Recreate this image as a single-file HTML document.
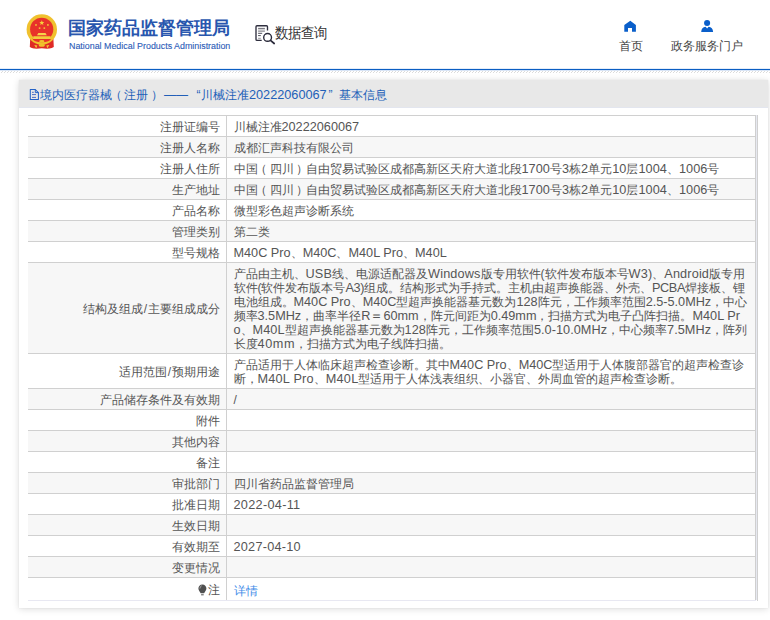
<!DOCTYPE html>
<html><head><meta charset="utf-8">
<style>
*{margin:0;padding:0;box-sizing:border-box}
html,body{width:770px;height:620px;overflow:hidden;background:#fff;font-family:"Liberation Sans",sans-serif}
.abs{position:absolute}
#hdr{position:absolute;left:0;top:0;width:770px;height:68px;background:#fff}
#emb{position:absolute;left:24px;top:13px}
#t1{position:absolute;left:68px;top:16px;font-size:17.8px;font-weight:600;color:#2856ae;white-space:nowrap;line-height:24px}
#t2{position:absolute;left:69px;top:40.5px;font-size:8.9px;color:#2d5db8;-webkit-text-stroke:0.12px #2d5db8;white-space:nowrap;line-height:10px}
#sq{position:absolute;left:254px;top:24px}
#sqt{position:absolute;left:275px;top:21.5px;font-size:13px;transform:scaleY(1.12);transform-origin:0 0;color:#333;white-space:nowrap;line-height:20px}
.nav{position:absolute;font-size:12px;color:#444;white-space:nowrap;line-height:16px}
#bl{position:absolute;left:0;top:68px;width:770px;height:3px;background:linear-gradient(#e4edf9 0 1px,#0a5ec3 1px 2px,#d9e5f6 2px 3px)}
#h1{position:absolute;left:0;top:71px;width:770px;height:1px;background:repeating-linear-gradient(90deg,transparent 0 2px,#dcdcdc 2px 3px)}
#h2{position:absolute;left:0;top:72px;width:770px;height:1px;background:repeating-linear-gradient(90deg,transparent 0 1px,#dcdcdc 1px 2px,transparent 2px 3px)}
#panel{position:absolute;left:19px;top:80px;width:749px;height:528px;background:#fff;box-shadow:0 1px 7px rgba(0,0,0,.14),0 0 1px rgba(0,0,0,.1)}
#ph{position:absolute;left:0;top:0;width:749px;height:28px;background:#e8e8e8;border-bottom:1px solid #e3e6ef}
.pt{position:absolute;top:7px;margin-left:-1px;font-size:12px;color:#2260b8;white-space:nowrap;line-height:16px}
#tbl{position:absolute;left:9px;top:35px;width:728px;border-collapse:collapse;font-size:12px;color:#555;line-height:14px}
#tbl td{border-top:1px solid #d0d0d0;padding:3.5px 0 2.5px 0;vertical-align:middle;white-space:nowrap}
#tbl td.l{width:198px;text-align:right;padding-right:5.5px;border-right:1px solid #d0d0d0}
#tbl td.v{padding-left:7px;border-right:1px solid #cfcfcf}
#tbl tr.g td{background:#f7f7f7}
#tbl tr.last td{border-bottom:1px solid #e8e8f2;padding-top:5px;padding-bottom:3px}
#tbl tr.last td.v{padding-top:6px;padding-bottom:2px}
.ln{height:14px}
a{color:#3f8ce8;text-decoration:none}
</style></head><body>
<div id="hdr">
 <svg id="emb" width="36" height="38" viewBox="0 0 36 38">
  <path d="M6.2 26 L5.8 34 Q8 35.6 10.5 35.4 L12.5 35.8 L17.8 35.2 L23 35.8 L25 35.4 Q27.6 35.6 29.8 34 L29.4 26Z" fill="#df2a26"/>
  <circle cx="17.8" cy="16.5" r="15.2" fill="#f0c12e"/>
  <circle cx="17.7" cy="16.3" r="11.6" fill="#e8322a"/>
  <ellipse cx="17.8" cy="25.8" rx="9.2" ry="3.4" fill="#e8322a"/>
  <polygon points="17.8,7.2 18.5,8.9 20.3,9 18.9,10.2 19.4,11.9 17.8,10.9 16.2,11.9 16.7,10.2 15.3,9 17.1,8.9" fill="#f6d23c"/>
  <circle cx="12" cy="11.9" r="0.95" fill="#f2c636"/><circle cx="23.9" cy="11.9" r="0.95" fill="#f2c636"/>
  <circle cx="15.6" cy="15.1" r="0.95" fill="#f2c636"/><circle cx="20.3" cy="15.1" r="0.95" fill="#f2c636"/>
  <path d="M13 22.2 L14.3 19.9 H21.5 L22.8 22.2Z" fill="#f6d44a"/>
  <path d="M8.9 26 L9.4 23.2 H26.4 L27 26Z" fill="#f3cd3c"/>
  <ellipse cx="17.8" cy="28.2" rx="2.6" ry="1.2" fill="#f0c12e"/>
  <ellipse cx="17.8" cy="32.2" rx="3" ry="1.5" fill="#f0c12e"/>
  <path d="M10.3 32 L13.3 32.6 L12.2 35.3Z M25.3 32 L22.3 32.6 L23.4 35.3Z" fill="#f2c636"/>
 </svg>
 <div id="t1">国家药品监督管理局</div>
 <div id="t2">National Medical Products Administration</div>
 <svg id="sq" width="22" height="21" viewBox="0 0 22 21">
  <path d="M7.7 16.4 H3 Q2 16.4 2 15.4 V2.7 Q2 1.7 3 1.7 H12.5 Q13.5 1.7 13.5 2.7 V6.6" fill="none" stroke="#2f2f3f" stroke-width="1.35"/>
  <path d="M4.1 4.4 H10.9 M4.1 7.1 H10.9" stroke="#6a6a74" stroke-width="1"/>
  <path d="M4.1 5.75 H10.9" stroke="#c4c4c8" stroke-width="1"/>
  <path d="M4.1 9.3 H8.2 M4.1 11.6 H6.8" stroke="#3a3a48" stroke-width="0.9"/>
  <path d="M4.1 14.3 H6.8" stroke="#8a8a92" stroke-width="0.9"/>
  <circle cx="13.6" cy="13.4" r="3.9" fill="none" stroke="#2a2a3a" stroke-width="1.4"/>
  <path d="M16.5 16.4 L20.2 19.5" stroke="#2a2a3a" stroke-width="1.7" stroke-linecap="round"/>
 </svg>
 <div id="sqt">数据查询</div>
 <svg class="abs" style="left:624px;top:20px" width="13" height="12" viewBox="0 0 13 12"><path d="M0.3 5 L6.3 0.8 L11.9 5 V11.8 H8 V7.9 H4 V11.8 H0.3Z" fill="#0a5fca"/></svg>
 <div class="nav" style="left:618.5px;top:38px">首页</div>
 <svg class="abs" style="left:701px;top:19px" width="13" height="14" viewBox="0 0 13 14"><circle cx="6.1" cy="4" r="3.05" fill="#0a5fca"/><path d="M0.2 12.9 Q0.5 8.1 4.6 7.8 L6.1 9.5 L7.6 7.8 Q11.8 8.1 12.1 12.9Z" fill="#0a5fca"/></svg>
 <div class="nav" style="left:670.5px;top:38px">政务服务门户</div>
</div>
<div id="bl"></div>
<div id="h1"></div><div id="h2"></div>
<div id="panel">
 <div id="ph">
  <svg class="abs" style="left:10px;top:9px" width="11" height="11" viewBox="0 0 11 11"><path d="M1.3 0.5 H6.3 L9.4 3.6 V10.4 H1.3Z" fill="none" stroke="#2462c6" stroke-width="1.05" stroke-linejoin="round"/><path d="M6.3 0.5 V3.6 H9.4" fill="none" stroke="#2462c6" stroke-width="1"/><path d="M3 3.3 H4.8 M3 5.6 H7 M3 8.4 H7" stroke="#3a5fc0" stroke-width="0.9"/></svg>
  <div class="pt" style="left:22px">境内医疗器械<span style="position:relative;left:-2px">（</span>注册<span style="position:relative;left:2.5px">）</span></div>
  <div class="pt" style="left:146px">——</div>
  <div class="pt" style="left:178.5px">“</div>
  <div class="pt" style="left:183px">川械注准<span style="font-size:12.7px">20222060067</span></div>
  <div class="pt" style="left:310.5px">”</div>
  <div class="pt" style="left:321px">基本信息</div>
 </div>
 <table id="tbl">
<tr><td class="l">注册证编号</td><td class="v">川械注准<span style="font-size:12.7px">20222060067</span></td></tr>
<tr class="g"><td class="l">注册人名称</td><td class="v">成都汇声科技有限公司</td></tr>
<tr><td class="l">注册人住所</td><td class="v">中国<span style="position:relative;left:-3px">（</span>四川<span style="position:relative;left:2px">）</span>自由贸易试验区成都高新区天府大道北段<span style="font-size:12.7px;letter-spacing:0.06px">1700</span>号<span style="font-size:12.7px;letter-spacing:0.06px">3</span>栋<span style="font-size:12.7px;letter-spacing:0.06px">2</span>单元<span style="font-size:12.7px;letter-spacing:0.06px">10</span>层<span style="font-size:12.7px;letter-spacing:0.06px">1004</span>、<span style="font-size:12.7px;letter-spacing:0.06px">1006</span>号</td></tr>
<tr class="g"><td class="l">生产地址</td><td class="v">中国<span style="position:relative;left:-3px">（</span>四川<span style="position:relative;left:2px">）</span>自由贸易试验区成都高新区天府大道北段<span style="font-size:12.7px;letter-spacing:0.06px">1700</span>号<span style="font-size:12.7px;letter-spacing:0.06px">3</span>栋<span style="font-size:12.7px;letter-spacing:0.06px">2</span>单元<span style="font-size:12.7px;letter-spacing:0.06px">10</span>层<span style="font-size:12.7px;letter-spacing:0.06px">1004</span>、<span style="font-size:12.7px;letter-spacing:0.06px">1006</span>号</td></tr>
<tr><td class="l">产品名称</td><td class="v">微型彩色超声诊断系统</td></tr>
<tr class="g"><td class="l">管理类别</td><td class="v">第二类</td></tr>
<tr><td class="l">型号规格</td><td class="v"><span style="font-size:12.7px">M40C Pro</span>、<span style="font-size:12.7px">M40C</span>、<span style="font-size:12.7px">M40L Pro</span>、<span style="font-size:12.7px">M40L</span></td></tr>
<tr class="g"><td class="l">结构及组成<span style="margin:0 0.8px">/</span>主要组成成分</td><td class="v"><div class="ln">产品由主机、<span style="font-size:12.7px;letter-spacing:0.15px">USB</span>线、电源适配器及<span style="font-size:12.7px;letter-spacing:0.15px">Windows</span>版专用软件(软件发布版本号<span style="font-size:12.7px;letter-spacing:0.15px">W3)</span>、<span style="font-size:12.7px;letter-spacing:0.15px">Android</span>版专用</div><div class="ln">软件(软件发布版本号<span style="font-size:12.7px;letter-spacing:-0.4px">A3)</span>组成。结构形式为手持式。主机由超声换能器、外壳、<span style="font-size:12.7px;letter-spacing:-0.4px">PCBA</span>焊接板、锂</div><div class="ln">电池组成。<span style="font-size:12.7px">M40C Pro</span>、<span style="font-size:12.7px">M40C</span>型超声换能器基元数为<span style="font-size:12.7px">128</span>阵元，工作频率范围<span style="font-size:12.7px">2.5-5.0MHz</span>，中心</div><div class="ln">频率<span style="font-size:12.7px">3.5MHz</span>，曲率半径<span style="font-size:12.7px">R＝60mm</span>，阵元间距为<span style="font-size:12.7px">0.49mm</span>，扫描方式为电子凸阵扫描。<span style="font-size:12.7px">M40L Pr</span></div><div class="ln"><span style="font-size:12.7px;letter-spacing:0.05px">o</span>、<span style="font-size:12.7px;letter-spacing:0.05px">M40L</span>型超声换能器基元数为<span style="font-size:12.7px;letter-spacing:0.05px">128</span>阵元，工作频率范围<span style="font-size:12.7px;letter-spacing:0.05px">5.0-10.0MHz</span>，中心频率<span style="font-size:12.7px;letter-spacing:0.05px">7.5MHz</span>，阵列</div><div class="ln">长度<span style="font-size:12.7px;letter-spacing:0.6px">40mm</span>，扫描方式为电子线阵扫描。</div></td></tr>
<tr><td class="l">适用范围<span style="margin:0 0.8px">/</span>预期用途</td><td class="v"><div class="ln">产品适用于人体临床超声检查诊断。其中<span style="font-size:12.7px">M40C Pro</span>、<span style="font-size:12.7px">M40C</span>型适用于人体腹部器官的超声检查诊</div><div class="ln">断，<span style="font-size:12.7px;letter-spacing:0.22px">M40L Pro</span>、<span style="font-size:12.7px;letter-spacing:0.22px">M40L</span>型适用于人体浅表组织、小器官、外周血管的超声检查诊断。</div></td></tr>
<tr class="g"><td class="l">产品储存条件及有效期</td><td class="v">/</td></tr>
<tr><td class="l">附件</td><td class="v"></td></tr>
<tr class="g"><td class="l">其他内容</td><td class="v"></td></tr>
<tr><td class="l">备注</td><td class="v"></td></tr>
<tr class="g"><td class="l">审批部门</td><td class="v">四川省药品监督管理局</td></tr>
<tr><td class="l">批准日期</td><td class="v"><span style="font-size:12.7px;letter-spacing:0.3px">2022-04-11</span></td></tr>
<tr class="g"><td class="l">生效日期</td><td class="v"></td></tr>
<tr><td class="l">有效期至</td><td class="v"><span style="font-size:12.7px;letter-spacing:0.25px">2027-04-10</span></td></tr>
<tr class="g"><td class="l">变更情况</td><td class="v"></td></tr>
<tr class="last"><td class="l"><svg width="9" height="12" viewBox="0 0 9 12" style="vertical-align:-2px;margin-right:1px"><path d="M4.4 0.4 C6.8 0.4 8.4 2.2 8.4 4.4 C8.4 6.4 6.8 7.6 6.1 9.3 L2.7 9.3 C2 7.6 0.4 6.4 0.4 4.4 C0.4 2.2 2 0.4 4.4 0.4Z" fill="#505050"/><path d="M1.9 4.6 Q1.9 2.3 3.8 1.7" fill="none" stroke="#b8b8b8" stroke-width="0.8"/><rect x="3.1" y="10.3" width="2.6" height="1" fill="#555"/></svg>注</td><td class="v"><a>详情</a></td></tr>
 </table>
 <div class="abs" style="left:737px;top:35px;width:1px;height:485px;background:#e6e8f0"></div>
 <div class="abs" style="left:738px;top:35px;width:1px;height:486px;background:#d0d0d0"></div>
</div>
</body></html>
